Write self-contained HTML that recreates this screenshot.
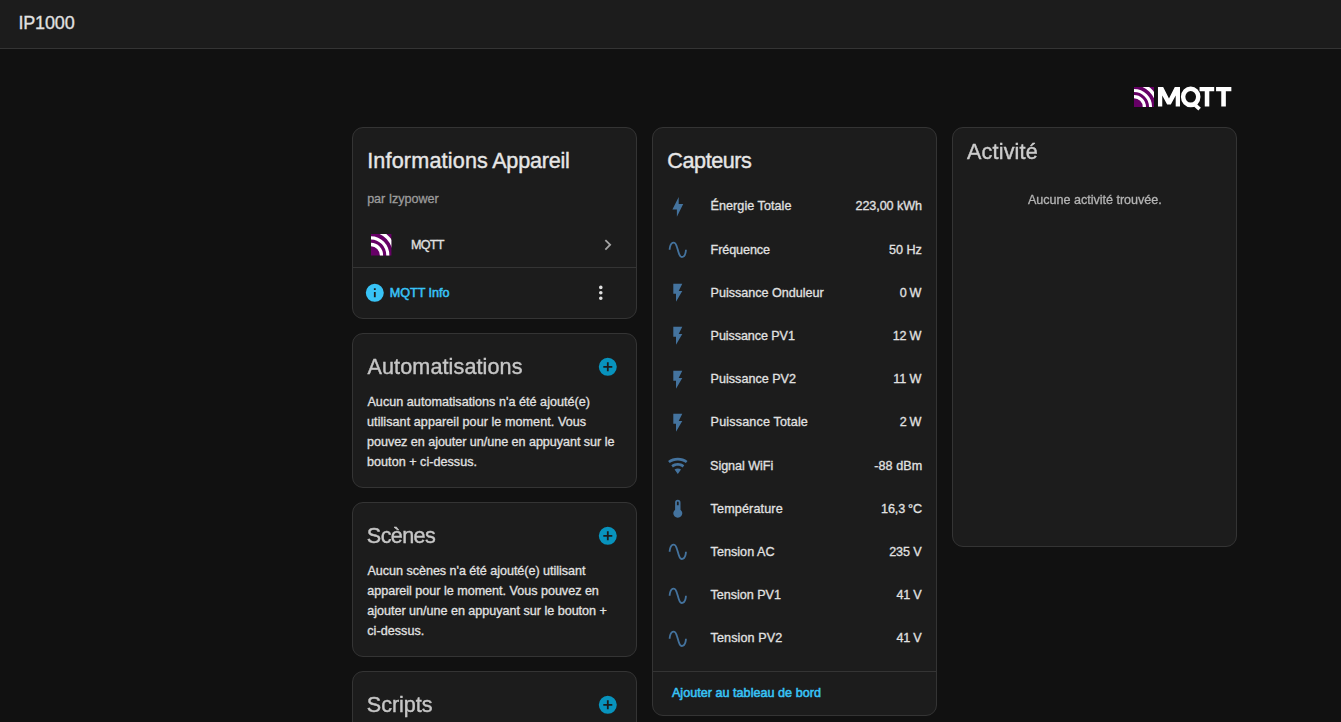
<!DOCTYPE html>
<html lang="fr"><head><meta charset="utf-8"><title>IP1000</title>
<style>
html,body{margin:0;padding:0}
body{width:1341px;height:722px;overflow:hidden;background:#111111;position:relative;font-family:'Liberation Sans', sans-serif}
.card{position:absolute;box-sizing:border-box;background:#1c1c1c;border:1px solid #343434;border-radius:11px}
.hl{position:absolute;height:1px}
.i{position:absolute;display:block}
.t{position:absolute;white-space:pre;display:block}
</style></head>
<body>
<div style="position:absolute;left:0;top:0;width:1341px;height:48px;background:#1c1c1c"></div>
<div class="hl" style="left:0px;top:48px;width:1341px;background:#343434"></div>
<div class="card" style="left:352px;top:127px;width:285px;height:192px"></div>
<div class="hl" style="left:353px;top:267px;width:283px;background:#343434"></div>
<div class="card" style="left:352px;top:333px;width:285px;height:155px"></div>
<div class="card" style="left:352px;top:502px;width:285px;height:155px"></div>
<div class="card" style="left:352px;top:671px;width:285px;height:155px"></div>
<div class="card" style="left:652px;top:127px;width:285px;height:589px"></div>
<div class="hl" style="left:653px;top:671px;width:283px;background:#343434"></div>
<div class="card" style="left:952px;top:127px;width:285px;height:420px"></div>
<svg class="i" style="left:371.30px;top:234.30px;width:20.4px;height:21.5px" viewBox="0 0 20 20" preserveAspectRatio="none"><defs><clipPath id="c371"><rect width="20" height="20"/></clipPath></defs><rect width="20" height="20" fill="#660066"/><g clip-path="url(#c371)" fill="none" stroke="#fff"><circle cx="0" cy="20" r="10.3" stroke-width="3.2"/><circle cx="0" cy="20" r="16.5" stroke-width="3.0"/><circle cx="0" cy="20" r="23.3" stroke-width="3.3"/></g></svg>
<svg class="i" style="left:597.10px;top:234.20px;width:21.6px;height:21.6px" viewBox="0 0 24 24"><path fill="#a4a4a4" d="M8.59,16.58L13.17,12L8.59,7.41L10,6L16,12L10,18L8.59,16.58Z"/></svg>
<svg class="i" style="left:364.10px;top:282.00px;width:21.6px;height:21.6px" viewBox="0 0 24 24"><path fill="#38c3f6" d="M13,9H11V7H13M13,17H11V11H13M12,2A10,10 0 0,0 2,12A10,10 0 0,0 12,22A10,10 0 0,0 22,12A10,10 0 0,0 12,2Z"/></svg>
<svg class="i" style="left:590.00px;top:282.00px;width:21.6px;height:21.6px" viewBox="0 0 24 24"><path fill="#e1e1e1" d="M12,16A2,2 0 0,1 14,18A2,2 0 0,1 12,20A2,2 0 0,1 10,18A2,2 0 0,1 12,16M12,10A2,2 0 0,1 14,12A2,2 0 0,1 12,14A2,2 0 0,1 10,12A2,2 0 0,1 12,10M12,4A2,2 0 0,1 14,6A2,2 0 0,1 12,8A2,2 0 0,1 10,6A2,2 0 0,1 12,4Z"/></svg>
<svg class="i" style="left:597.10px;top:356.00px;width:21.6px;height:21.6px" viewBox="0 0 24 24"><path fill="#0893bd" d="M17,13H13V17H11V13H7V11H11V7H13V11H17M12,2A10,10 0 0,0 2,12A10,10 0 0,0 12,22A10,10 0 0,0 22,12A10,10 0 0,0 12,2Z"/></svg>
<svg class="i" style="left:597.10px;top:525.00px;width:21.6px;height:21.6px" viewBox="0 0 24 24"><path fill="#0893bd" d="M17,13H13V17H11V13H7V11H11V7H13V11H17M12,2A10,10 0 0,0 2,12A10,10 0 0,0 12,22A10,10 0 0,0 22,12A10,10 0 0,0 12,2Z"/></svg>
<svg class="i" style="left:597.10px;top:694.00px;width:21.6px;height:21.6px" viewBox="0 0 24 24"><path fill="#0893bd" d="M17,13H13V17H11V13H7V11H11V7H13V11H17M12,2A10,10 0 0,0 2,12A10,10 0 0,0 12,22A10,10 0 0,0 22,12A10,10 0 0,0 12,2Z"/></svg>
<svg class="i" style="left:667.00px;top:195.70px;width:21.6px;height:21.6px" viewBox="0 0 24 24"><path fill="#44739e" d="M11 15H6L13 1V9H18L11 23V15Z"/></svg>
<svg class="i" style="left:667.00px;top:238.90px;width:21.6px;height:21.6px" viewBox="0 0 24 24"><path fill="#44739e" d="M16.5,21C13.5,21 12.31,16.76 11.05,12.28C10.14,9.04 9,5 7.5,5C4.11,5 4,11.93 4,12H2C2,11.63 2.06,3 7.5,3C10.5,3 11.71,7.25 12.97,11.74C13.83,14.8 15,19 16.5,19C19.94,19 20.03,12.07 20.03,12H22.03C22.03,12.37 21.97,21 16.5,21Z"/></svg>
<svg class="i" style="left:667.00px;top:282.10px;width:21.6px;height:21.6px" viewBox="0 0 24 24"><path fill="#44739e" d="M7,2V13H10V22L17,10H13L17,2H7Z"/></svg>
<svg class="i" style="left:667.00px;top:325.30px;width:21.6px;height:21.6px" viewBox="0 0 24 24"><path fill="#44739e" d="M7,2V13H10V22L17,10H13L17,2H7Z"/></svg>
<svg class="i" style="left:667.00px;top:368.50px;width:21.6px;height:21.6px" viewBox="0 0 24 24"><path fill="#44739e" d="M7,2V13H10V22L17,10H13L17,2H7Z"/></svg>
<svg class="i" style="left:667.00px;top:411.70px;width:21.6px;height:21.6px" viewBox="0 0 24 24"><path fill="#44739e" d="M7,2V13H10V22L17,10H13L17,2H7Z"/></svg>
<svg class="i" style="left:667.00px;top:454.90px;width:21.6px;height:21.6px" viewBox="0 0 24 24"><path fill="#44739e" d="M12,21L15.6,16.2C14.6,15.45 13.35,15 12,15C10.65,15 9.4,15.45 8.4,16.2L12,21M12,3C7.95,3 4.21,4.34 1.2,6.6L3,9C5.5,7.12 8.62,6 12,6C15.38,6 18.5,7.12 21,9L22.8,6.6C19.79,4.34 16.05,3 12,3M12,9C9.3,9 6.81,9.89 4.8,11.4L6.6,13.8C8.1,12.67 9.97,12 12,12C14.03,12 15.9,12.67 17.4,13.8L19.2,11.4C17.19,9.89 14.7,9 12,9Z"/></svg>
<svg class="i" style="left:667.00px;top:498.10px;width:21.6px;height:21.6px" viewBox="0 0 24 24"><path fill="#44739e" d="M15 13V5A3 3 0 0 0 9 5V13A5 5 0 1 0 15 13M12 4A1 1 0 0 1 13 5V8H11V5A1 1 0 0 1 12 4Z"/></svg>
<svg class="i" style="left:667.00px;top:541.30px;width:21.6px;height:21.6px" viewBox="0 0 24 24"><path fill="#44739e" d="M16.5,21C13.5,21 12.31,16.76 11.05,12.28C10.14,9.04 9,5 7.5,5C4.11,5 4,11.93 4,12H2C2,11.63 2.06,3 7.5,3C10.5,3 11.71,7.25 12.97,11.74C13.83,14.8 15,19 16.5,19C19.94,19 20.03,12.07 20.03,12H22.03C22.03,12.37 21.97,21 16.5,21Z"/></svg>
<svg class="i" style="left:667.00px;top:584.50px;width:21.6px;height:21.6px" viewBox="0 0 24 24"><path fill="#44739e" d="M16.5,21C13.5,21 12.31,16.76 11.05,12.28C10.14,9.04 9,5 7.5,5C4.11,5 4,11.93 4,12H2C2,11.63 2.06,3 7.5,3C10.5,3 11.71,7.25 12.97,11.74C13.83,14.8 15,19 16.5,19C19.94,19 20.03,12.07 20.03,12H22.03C22.03,12.37 21.97,21 16.5,21Z"/></svg>
<svg class="i" style="left:667.00px;top:627.70px;width:21.6px;height:21.6px" viewBox="0 0 24 24"><path fill="#44739e" d="M16.5,21C13.5,21 12.31,16.76 11.05,12.28C10.14,9.04 9,5 7.5,5C4.11,5 4,11.93 4,12H2C2,11.63 2.06,3 7.5,3C10.5,3 11.71,7.25 12.97,11.74C13.83,14.8 15,19 16.5,19C19.94,19 20.03,12.07 20.03,12H22.03C22.03,12.37 21.97,21 16.5,21Z"/></svg>
<svg class="i" style="left:1133.90px;top:86.90px;width:20.1px;height:20px" viewBox="0 0 20 20" preserveAspectRatio="none"><defs><clipPath id="c1133"><rect width="20" height="20"/></clipPath></defs><rect width="20" height="20" fill="#660066"/><g clip-path="url(#c1133)" fill="none" stroke="#fff"><circle cx="0" cy="20" r="10.3" stroke-width="3.2"/><circle cx="0" cy="20" r="16.5" stroke-width="3.0"/><circle cx="0" cy="20" r="23.3" stroke-width="3.3"/></g></svg>
<svg class="i" style="left:1154px;top:80px;width:82px;height:36px" viewBox="0 0 82 36" fill="#fff"><path d="M3.97,26.6V7.03H9.17L14.98,18.5L20.8,7.03H25.99V26.6H21.7V15.5L16.8,24.5H13.15L8.25,15.5V26.6Z"/><path fill-rule="evenodd" d="M36.69,6.4A9.8,10.4 0 1 0 36.69,27.2A9.8,10.4 0 1 0 36.69,6.4ZM36.69,11A5.35,5.8 0 1 1 36.69,22.6A5.35,5.8 0 1 1 36.69,11Z"/><path d="M39.6,23.6L45.6,29.2" stroke="#fff" stroke-width="3.7" fill="none"/><path d="M45.55,7.03H60.2V11.3H55.3V26.6H50.75V11.3H45.55Z"/><path d="M62.06,7.03H77.35V11.3H71.85V26.6H67.26V11.3H62.06Z"/></svg>
<span class="t" style="left:18.39px;top:8.50px;font-size:18.0px;line-height:29px;height:29px;letter-spacing:-0.139px;color:#e1e1e1;-webkit-text-stroke:0.3px #e1e1e1;">IP1000</span>
<span class="t" style="left:367.13px;top:143.00px;font-size:21.6px;line-height:35px;height:35px;letter-spacing:0.178px;color:#e6e6e6;-webkit-text-stroke:0.4px #e6e6e6;">Informations</span>
<span class="t" style="left:492.18px;top:143.00px;font-size:21.6px;line-height:35px;height:35px;letter-spacing:-0.214px;color:#e6e6e6;-webkit-text-stroke:0.4px #e6e6e6;">Appareil</span>
<span class="t" style="left:367.14px;top:189.00px;font-size:12.6px;line-height:20px;height:20px;letter-spacing:-0.050px;color:#9b9b9b;-webkit-text-stroke:0.3px #9b9b9b;">par Izypower</span>
<span class="t" style="left:410.98px;top:235.00px;font-size:12.6px;line-height:20px;height:20px;letter-spacing:-0.716px;color:#e1e1e1;-webkit-text-stroke:0.3px #e1e1e1;">MQTT</span>
<span class="t" style="left:389.76px;top:283.00px;font-size:12.6px;line-height:20px;height:20px;letter-spacing:-0.022px;color:#38c3f6;-webkit-text-stroke:0.55px #38c3f6;">MQTT Info</span>
<span class="t" style="left:367.48px;top:349.00px;font-size:21.6px;line-height:35px;height:35px;letter-spacing:0.102px;color:#c6c6c6;-webkit-text-stroke:0.4px #c6c6c6;will-change:opacity;">Automatisations</span>
<span class="t" style="left:367.45px;top:392.00px;font-size:12.6px;line-height:20px;height:20px;letter-spacing:0.028px;color:#e1e1e1;-webkit-text-stroke:0.3px #e1e1e1;">Aucun automatisations n'a été ajouté(e)</span>
<span class="t" style="left:367.07px;top:412.00px;font-size:12.6px;line-height:20px;height:20px;letter-spacing:0.052px;color:#e1e1e1;-webkit-text-stroke:0.3px #e1e1e1;">utilisant appareil pour le moment. Vous</span>
<span class="t" style="left:367.04px;top:432.00px;font-size:12.6px;line-height:20px;height:20px;letter-spacing:-0.045px;color:#e1e1e1;-webkit-text-stroke:0.3px #e1e1e1;">pouvez en ajouter un/une en appuyant sur le</span>
<span class="t" style="left:367.04px;top:452.00px;font-size:12.6px;line-height:20px;height:20px;letter-spacing:0.021px;color:#e1e1e1;-webkit-text-stroke:0.3px #e1e1e1;">bouton + ci-dessus.</span>
<span class="t" style="left:366.87px;top:518.00px;font-size:21.6px;line-height:35px;height:35px;letter-spacing:-0.618px;color:#c6c6c6;-webkit-text-stroke:0.4px #c6c6c6;will-change:opacity;">Scènes</span>
<span class="t" style="left:367.45px;top:561.00px;font-size:12.6px;line-height:20px;height:20px;letter-spacing:-0.035px;color:#e1e1e1;-webkit-text-stroke:0.3px #e1e1e1;">Aucun scènes n'a été ajouté(e) utilisant</span>
<span class="t" style="left:367.21px;top:581.00px;font-size:12.6px;line-height:20px;height:20px;letter-spacing:-0.020px;color:#e1e1e1;-webkit-text-stroke:0.3px #e1e1e1;">appareil pour le moment. Vous pouvez en</span>
<span class="t" style="left:367.21px;top:601.00px;font-size:12.6px;line-height:20px;height:20px;letter-spacing:-0.020px;color:#e1e1e1;-webkit-text-stroke:0.3px #e1e1e1;">ajouter un/une en appuyant sur le bouton +</span>
<span class="t" style="left:367.23px;top:621.00px;font-size:12.6px;line-height:20px;height:20px;letter-spacing:0.049px;color:#e1e1e1;-webkit-text-stroke:0.3px #e1e1e1;">ci-dessus.</span>
<span class="t" style="left:366.87px;top:687.00px;font-size:21.6px;line-height:35px;height:35px;letter-spacing:-0.048px;color:#c6c6c6;-webkit-text-stroke:0.4px #c6c6c6;will-change:opacity;">Scripts</span>
<span class="t" style="left:667.30px;top:143.00px;font-size:21.6px;line-height:35px;height:35px;letter-spacing:-0.428px;color:#e6e6e6;-webkit-text-stroke:0.4px #e6e6e6;">Capteurs</span>
<span class="t" style="left:710.58px;top:196.00px;font-size:12.6px;line-height:20px;height:20px;letter-spacing:0.043px;color:#e1e1e1;-webkit-text-stroke:0.3px #e1e1e1;">Énergie Totale</span>
<span class="t" style="left:855.49px;top:196.00px;font-size:12.6px;line-height:20px;height:20px;letter-spacing:-0.081px;color:#e1e1e1;-webkit-text-stroke:0.3px #e1e1e1;">223,00 kWh</span>
<span class="t" style="left:710.58px;top:240.00px;font-size:12.6px;line-height:20px;height:20px;letter-spacing:-0.092px;color:#e1e1e1;-webkit-text-stroke:0.3px #e1e1e1;">Fréquence</span>
<span class="t" style="left:889.05px;top:240.00px;font-size:12.6px;line-height:20px;height:20px;letter-spacing:-0.021px;color:#e1e1e1;-webkit-text-stroke:0.3px #e1e1e1;">50 Hz</span>
<span class="t" style="left:710.58px;top:283.00px;font-size:12.6px;line-height:20px;height:20px;letter-spacing:-0.023px;color:#e1e1e1;-webkit-text-stroke:0.3px #e1e1e1;">Puissance Onduleur</span>
<span class="t" style="left:899.63px;top:283.00px;font-size:12.6px;line-height:20px;height:20px;letter-spacing:-0.100px;color:#e1e1e1;word-spacing:-0.500px;-webkit-text-stroke:0.3px #e1e1e1;">0 W</span>
<span class="t" style="left:710.58px;top:326.00px;font-size:12.6px;line-height:20px;height:20px;letter-spacing:-0.092px;color:#e1e1e1;-webkit-text-stroke:0.3px #e1e1e1;">Puissance PV1</span>
<span class="t" style="left:892.73px;top:326.00px;font-size:12.6px;line-height:20px;height:20px;letter-spacing:-0.100px;color:#e1e1e1;word-spacing:-0.500px;-webkit-text-stroke:0.3px #e1e1e1;">12 W</span>
<span class="t" style="left:710.58px;top:369.00px;font-size:12.6px;line-height:20px;height:20px;letter-spacing:0.002px;color:#e1e1e1;-webkit-text-stroke:0.3px #e1e1e1;">Puissance PV2</span>
<span class="t" style="left:893.35px;top:369.00px;font-size:12.6px;line-height:20px;height:20px;letter-spacing:-0.100px;color:#e1e1e1;word-spacing:-0.114px;-webkit-text-stroke:0.3px #e1e1e1;">11 W</span>
<span class="t" style="left:710.58px;top:412.00px;font-size:12.6px;line-height:20px;height:20px;letter-spacing:0.154px;color:#e1e1e1;-webkit-text-stroke:0.3px #e1e1e1;">Puissance Totale</span>
<span class="t" style="left:899.63px;top:412.00px;font-size:12.6px;line-height:20px;height:20px;letter-spacing:-0.100px;color:#e1e1e1;word-spacing:-0.500px;-webkit-text-stroke:0.3px #e1e1e1;">2 W</span>
<span class="t" style="left:710.06px;top:456.00px;font-size:12.6px;line-height:20px;height:20px;letter-spacing:-0.051px;color:#e1e1e1;-webkit-text-stroke:0.3px #e1e1e1;">Signal WiFi</span>
<span class="t" style="left:874.13px;top:456.00px;font-size:12.6px;line-height:20px;height:20px;letter-spacing:0.087px;color:#e1e1e1;-webkit-text-stroke:0.3px #e1e1e1;">-88 dBm</span>
<span class="t" style="left:710.57px;top:499.00px;font-size:12.6px;line-height:20px;height:20px;letter-spacing:0.140px;color:#e1e1e1;-webkit-text-stroke:0.3px #e1e1e1;">Température</span>
<span class="t" style="left:880.99px;top:499.00px;font-size:12.6px;line-height:20px;height:20px;letter-spacing:-0.100px;color:#e1e1e1;word-spacing:-0.500px;-webkit-text-stroke:0.3px #e1e1e1;">16,3 °C</span>
<span class="t" style="left:710.57px;top:542.00px;font-size:12.6px;line-height:20px;height:20px;letter-spacing:0.027px;color:#e1e1e1;-webkit-text-stroke:0.3px #e1e1e1;">Tension AC</span>
<span class="t" style="left:889.19px;top:542.00px;font-size:12.6px;line-height:20px;height:20px;letter-spacing:-0.100px;color:#e1e1e1;word-spacing:-0.139px;-webkit-text-stroke:0.3px #e1e1e1;">235 V</span>
<span class="t" style="left:710.57px;top:585.00px;font-size:12.6px;line-height:20px;height:20px;letter-spacing:-0.031px;color:#e1e1e1;-webkit-text-stroke:0.3px #e1e1e1;">Tension PV1</span>
<span class="t" style="left:896.44px;top:585.00px;font-size:12.6px;line-height:20px;height:20px;letter-spacing:-0.100px;color:#e1e1e1;word-spacing:-0.490px;-webkit-text-stroke:0.3px #e1e1e1;">41 V</span>
<span class="t" style="left:710.57px;top:628.00px;font-size:12.6px;line-height:20px;height:20px;letter-spacing:0.089px;color:#e1e1e1;-webkit-text-stroke:0.3px #e1e1e1;">Tension PV2</span>
<span class="t" style="left:896.44px;top:628.00px;font-size:12.6px;line-height:20px;height:20px;letter-spacing:-0.100px;color:#e1e1e1;word-spacing:-0.490px;-webkit-text-stroke:0.3px #e1e1e1;">41 V</span>
<span class="t" style="left:671.91px;top:683.00px;font-size:12.6px;line-height:20px;height:20px;letter-spacing:0.023px;color:#38c3f6;-webkit-text-stroke:0.55px #38c3f6;">Ajouter au tableau de bord</span>
<span class="t" style="left:966.88px;top:134.00px;font-size:21.6px;line-height:35px;height:35px;letter-spacing:0.190px;color:#cccccc;-webkit-text-stroke:0.4px #cccccc;will-change:opacity;">Activité</span>
<span class="t" style="left:1027.95px;top:190.00px;font-size:12.6px;line-height:20px;height:20px;letter-spacing:-0.027px;color:#b4b4b4;-webkit-text-stroke:0.3px #b4b4b4;will-change:opacity;">Aucune activité trouvée.</span>
</body></html>
